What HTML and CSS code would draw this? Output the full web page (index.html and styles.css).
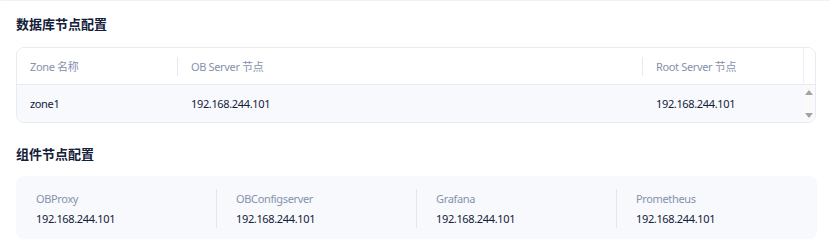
FILE: index.html
```html
<!DOCTYPE html>
<html lang="zh">
<head>
<meta charset="utf-8">
<link rel="stylesheet" href="styles.css">
</head>
<body>
<div class="topline"></div>
<div class="page">
  <h2 class="title">数据库节点配置</h2>
  <div class="table">
    <div class="th">Zone 名称</div>
    <div class="th sep">OB Server 节点</div>
    <div class="th sep">Root Server 节点</div>
    <div class="th sep scroll-head"></div>
    <div class="td">zone1</div>
    <div class="td">192.168.244.101</div>
    <div class="td">192.168.244.101</div>
    <div class="scrollbar">
      <span class="arrow up"></span>
      <span class="arrow down"></span>
    </div>
  </div>

  <h2 class="title second">组件节点配置</h2>
  <div class="card">
    <div class="comp">
      <div class="label">OBProxy</div>
      <div class="value">192.168.244.101</div>
    </div>
    <div class="comp divided">
      <div class="label">OBConfigserver</div>
      <div class="value">192.168.244.101</div>
    </div>
    <div class="comp divided">
      <div class="label">Grafana</div>
      <div class="value">192.168.244.101</div>
    </div>
    <div class="comp divided">
      <div class="label">Prometheus</div>
      <div class="value">192.168.244.101</div>
    </div>
  </div>
</div>
</body>
</html>
```
FILE: styles.css
```css
* { box-sizing: border-box; }
body {
  margin: 0;
  background: #ffffff;
  font-family: "Noto Sans", "Noto Sans CJK SC", sans-serif;
  color: #132039;
}
.topline {
  height: 1px;
  background: #f1f2f8;
  border-radius: 0 0 2px 2px;
}
.page {
  padding: 13px 13px 0 16px;
}
.title {
  margin: 0;
  font-size: 13px;
  line-height: 20px;
  font-weight: 700;
  color: #132039;
  font-family: "Noto Sans CJK SC", sans-serif;
}
.title.second {
  margin-top: 21px;
}
.table {
  margin-top: 13px;
  width: 800px;
  border: 1px solid #e8ebf3;
  border-radius: 8px;
  overflow: hidden;
  display: grid;
  grid-template-columns: 160px 465px 161px 12px;
  grid-template-rows: 36px 38px;
  font-size: 11px;
  letter-spacing: -0.35px;
}
.th {
  position: relative;
  display: flex;
  align-items: center;
  padding: 0 14px 0 13px;
  color: #8592ad;
  background: #ffffff;
  border-bottom: 1px solid #e8ebf3;
  height: 37px;
}
.th.sep { padding-left: 14px; }
.th.sep::before {
  content: "";
  position: absolute;
  left: 0;
  top: 9px;
  height: 19px;
  width: 1px;
  background: #e6e9f0;
}
.th.scroll-head::before {
  top: 0;
  height: 36px;
  background: #eef0f4;
}
.td {
  display: flex;
  align-items: center;
  padding: 0 14px 0 13px;
  background: #f8f9fd;
  color: #132039;
}
.td + .td { padding-left: 14px; }
.scrollbar {
  background: #fafafa;
  display: flex;
  flex-direction: column;
  justify-content: space-between;
  align-items: center;
  padding: 6px 0 4px;
}
.arrow {
  width: 0;
  height: 0;
  border-left: 4px solid transparent;
  border-right: 4px solid transparent;
}
.arrow.up { border-bottom: 5px solid #a3a3a3; }
.arrow.down { border-top: 5px solid #a3a3a3; }

.card {
  margin-top: 12px;
  width: 801px;
  height: 63px;
  background: #f8f9fc;
  border-radius: 8px;
  display: grid;
  grid-template-columns: 200px 200px 200px 201px;
  padding-top: 13px;
  font-size: 11px;
  letter-spacing: -0.35px;
}
.comp {
  height: 39px;
  padding: 1px 0 0 20px;
}
.comp.divided {
  border-left: 1px solid #e4e7ee;
  padding-left: 19px;
}
.label {
  line-height: 18px;
  color: #8592ad;
}
.value {
  margin-top: 2px;
  line-height: 18px;
  color: #132039;
}
```
